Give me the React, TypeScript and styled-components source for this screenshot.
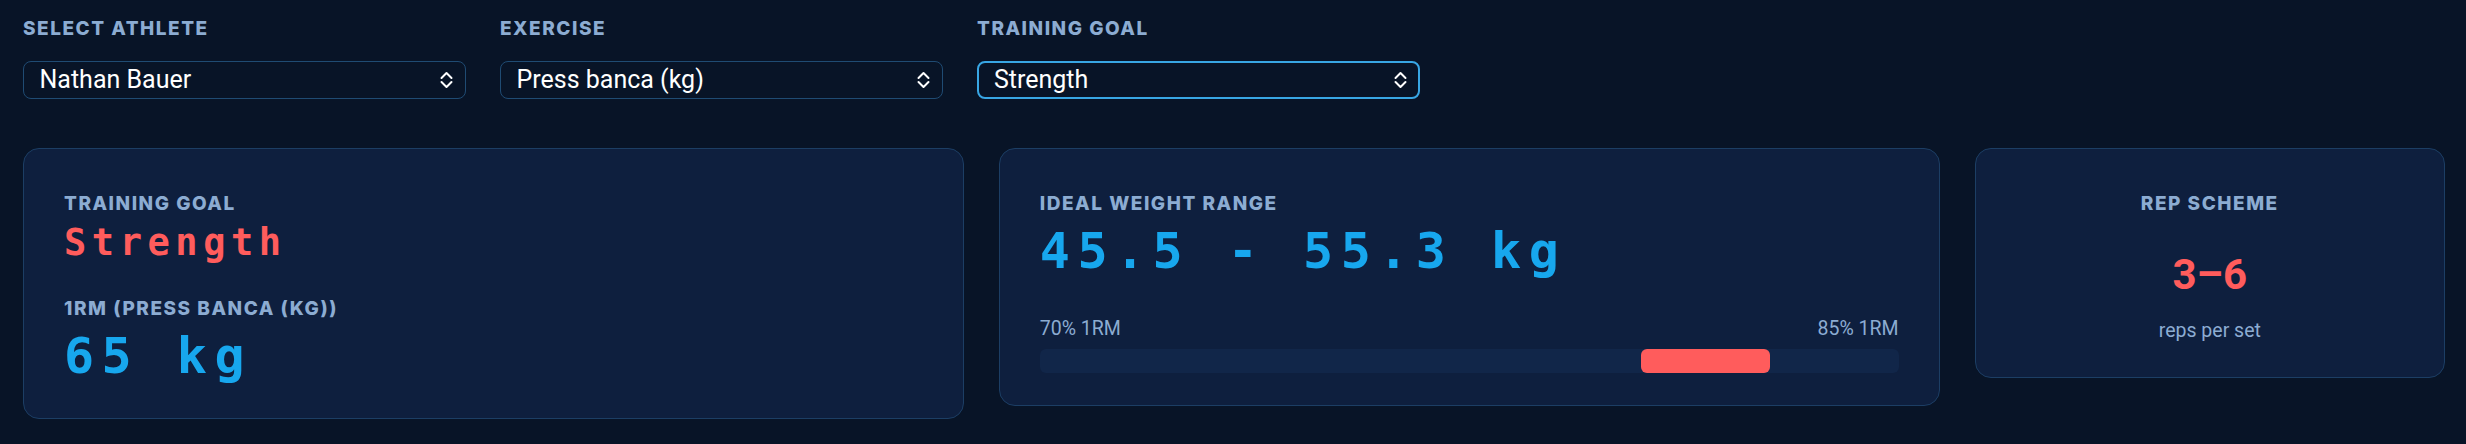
import { useState } from "react";
import styled, { createGlobalStyle } from "styled-components";

const GlobalStyle = createGlobalStyle`
  body {
    margin: 0;
    background: #081427;
    font-family: Roboto, "Liberation Sans", sans-serif;
  }
`;

const Page = styled.div`
  padding: 18px 21px 0 23px;
`;

const Filters = styled.div`
  display: flex;
  gap: 34px;
`;

const FilterGroup = styled.div`
  width: 443px;
  display: flex;
  flex-direction: column;
  gap: 20px;
`;

const Label = styled.div`
  font-family: Inter, "Liberation Sans", sans-serif;
  font-weight: 800;
  font-size: 19px;
  line-height: 1.2;
  letter-spacing: 0.08em;
  text-transform: uppercase;
  color: #8cacd2;
`;

const SelectBox = styled.div`
  position: relative;
  height: 38px;
`;

const Select = styled.select<{ $active?: boolean }>`
  appearance: none;
  width: 100%;
  height: 100%;
  box-sizing: border-box;
  background: transparent;
  border: ${(p) => (p.$active ? "2px solid #38a6e4" : "1.5px solid #1f4b73")};
  border-radius: 8px;
  color: #ffffff;
  font-family: Roboto, "Liberation Sans", sans-serif;
  font-size: 25px;
  padding: 0 40px 0 ${(p) => (p.$active ? "15px" : "15.5px")};
  outline: none;
  option {
    background: #0e1f3e;
  }
`;

const Chevron = styled.svg`
  position: absolute;
  right: 13px;
  top: 50%;
  transform: translateY(-50%);
  pointer-events: none;
`;

const Cards = styled.div`
  margin-top: 49px;
  display: grid;
  grid-template-columns: 2fr 2fr 1fr;
  gap: 35px;
  align-items: start;
`;

const Card = styled.div<{ $center?: boolean }>`
  background: #0e1f3e;
  border: 1px solid #1c3e64;
  border-radius: 16px;
  padding: 44px 40px 32px;
  text-align: ${(p) => (p.$center ? "center" : "left")};
`;

const Stat = styled.div`
  & + & {
    margin-top: 33px;
  }
`;

const Value = styled.div<{ $size: number; $color: string }>`
  margin-top: 5px;
  font-family: "DejaVu Sans Mono", "Liberation Mono", monospace;
  font-weight: 700;
  font-size: ${(p) => p.$size}px;
  line-height: 1.2;
  letter-spacing: 0.15em;
  color: ${(p) => p.$color};
  white-space: nowrap;
`;

const Range = styled.div`
  margin-top: 33px;
`;

const RangeEnds = styled.div`
  display: flex;
  justify-content: space-between;
  font-size: 19.5px;
  line-height: 1.5;
  color: #8cacd2;
`;

const Track = styled.div`
  position: relative;
  margin-top: 6px;
  height: 24px;
  border-radius: 6px;
  background: #112649;
`;

const Fill = styled.div`
  position: absolute;
  top: 0;
  bottom: 0;
  border-radius: 6px;
  background: #ff5c5c;
`;

const Reps = styled.div`
  margin-top: 34px;
  font-family: Roboto, "Liberation Sans", sans-serif;
  font-weight: 700;
  font-size: 42px;
  line-height: 1.2;
  color: #ff5c5c;
`;

const Caption = styled.div`
  margin-top: 16px;
  font-size: 19.5px;
  line-height: 1.5;
  color: #8cacd2;
`;

const UpDown = () => (
  <Chevron width="13" height="18" viewBox="0 0 13 18" fill="none">
    <path d="M1.5 7 L6.5 2 L11.5 7" stroke="#fff" strokeWidth="2" strokeLinecap="round" strokeLinejoin="round" />
    <path d="M1.5 11 L6.5 16 L11.5 11" stroke="#fff" strokeWidth="2" strokeLinecap="round" strokeLinejoin="round" />
  </Chevron>
);

const athletes = ["Nathan Bauer", "Lucia Romero", "Marco Silva"];
const exercises = ["Press banca (kg)", "Sentadilla (kg)", "Peso muerto (kg)"];

const goals: Record<string, { low: number; high: number; reps: string }> = {
  Strength: { low: 0.7, high: 0.85, reps: "3–6" },
  Hypertrophy: { low: 0.6, high: 0.75, reps: "8–12" },
  Endurance: { low: 0.4, high: 0.6, reps: "15–20" },
};

const oneRepMax = 65;

export default function App() {
  const [athlete, setAthlete] = useState(athletes[0]);
  const [exercise, setExercise] = useState(exercises[0]);
  const [goal, setGoal] = useState("Strength");

  const g = goals[goal];
  const low = (oneRepMax * g.low).toFixed(1);
  const high = (oneRepMax * g.high).toFixed(1);

  return (
    <>
      <GlobalStyle />
      <Page>
        <Filters>
          <FilterGroup>
            <Label>Select Athlete</Label>
            <SelectBox>
              <Select value={athlete} onChange={(e) => setAthlete(e.target.value)}>
                {athletes.map((a) => (
                  <option key={a}>{a}</option>
                ))}
              </Select>
              <UpDown />
            </SelectBox>
          </FilterGroup>
          <FilterGroup>
            <Label>Exercise</Label>
            <SelectBox>
              <Select value={exercise} onChange={(e) => setExercise(e.target.value)}>
                {exercises.map((x) => (
                  <option key={x}>{x}</option>
                ))}
              </Select>
              <UpDown />
            </SelectBox>
          </FilterGroup>
          <FilterGroup>
            <Label>Training Goal</Label>
            <SelectBox>
              <Select $active value={goal} onChange={(e) => setGoal(e.target.value)}>
                {Object.keys(goals).map((k) => (
                  <option key={k}>{k}</option>
                ))}
              </Select>
              <UpDown />
            </SelectBox>
          </FilterGroup>
        </Filters>

        <Cards>
          <Card>
            <Stat>
              <Label>Training Goal</Label>
              <Value $size={37} $color="#ff5c5c">{goal}</Value>
            </Stat>
            <Stat>
              <Label>1RM ({exercise})</Label>
              <Value $size={50} $color="#17a7ee">{oneRepMax} kg</Value>
            </Stat>
          </Card>

          <Card>
            <Label>Ideal Weight Range</Label>
            <Value $size={50} $color="#17a7ee">
              {low} - {high} kg
            </Value>
            <Range>
              <RangeEnds>
                <span>{Math.round(g.low * 100)}% 1RM</span>
                <span>{Math.round(g.high * 100)}% 1RM</span>
              </RangeEnds>
              <Track>
                <Fill style={{ left: `${g.low * 100}%`, width: `${(g.high - g.low) * 100}%` }} />
              </Track>
            </Range>
          </Card>

          <Card $center>
            <Label>Rep Scheme</Label>
            <Reps>{g.reps}</Reps>
            <Caption>reps per set</Caption>
          </Card>
        </Cards>
      </Page>
    </>
  );
}
